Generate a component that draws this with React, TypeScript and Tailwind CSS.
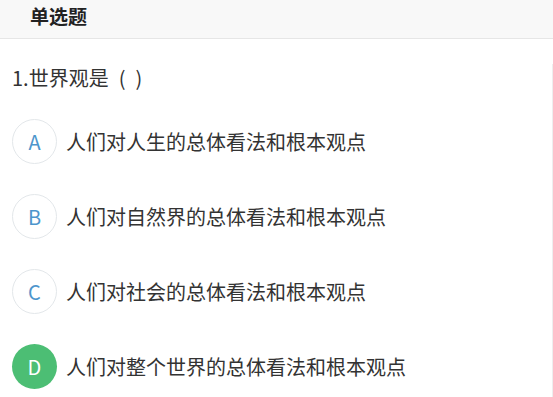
import React from "react";

const options = [
  { key: "A", text: "人们对人生的总体看法和根本观点" },
  { key: "B", text: "人们对自然界的总体看法和根本观点" },
  { key: "C", text: "人们对社会的总体看法和根本观点" },
  { key: "D", text: "人们对整个世界的总体看法和根本观点", selected: true },
];

export default function App() {
  return (
    <div
      className="w-[553px] h-[397px] bg-white overflow-hidden text-[#333]"
      style={{ fontFamily: '"Microsoft YaHei", "Noto Sans CJK SC", sans-serif' }}
    >
      {/* Header */}
      <div className="h-[39px] bg-[#f8f8f8] border-b border-[#e6e6e6] flex items-start pl-[30px] pt-[2px]">
        <span className="text-[19px] font-bold text-[#222] leading-[28px]">单选题</span>
      </div>

      <div className="pl-[12px] pr-[4px] border-r border-[#eeeeee] h-[358px]">
        <p className="text-[20px] leading-[28px] mt-[25px] text-[#333] whitespace-pre">
          1.世界观是<span className="ml-[10px]">(</span><span className="ml-[10px]">)</span>
        </p>

        <ul className="mt-[27px] flex flex-col gap-[30px]">
          {options.map((o) => (
            <li key={o.key} className="flex items-center gap-[9px]">
              {o.selected ? (
                <span className="w-[45px] h-[45px] rounded-full bg-[#4cbe74] text-white flex items-center justify-center text-[20px]">
                  {o.key}
                </span>
              ) : (
                <span className="w-[45px] h-[45px] rounded-full border border-[#e3e7ea] text-[#4d95cc] flex items-center justify-center text-[20px]">
                  {o.key}
                </span>
              )}
              <span className="text-[20px] text-[#333]">{o.text}</span>
            </li>
          ))}
        </ul>
      </div>
    </div>
  );
}
